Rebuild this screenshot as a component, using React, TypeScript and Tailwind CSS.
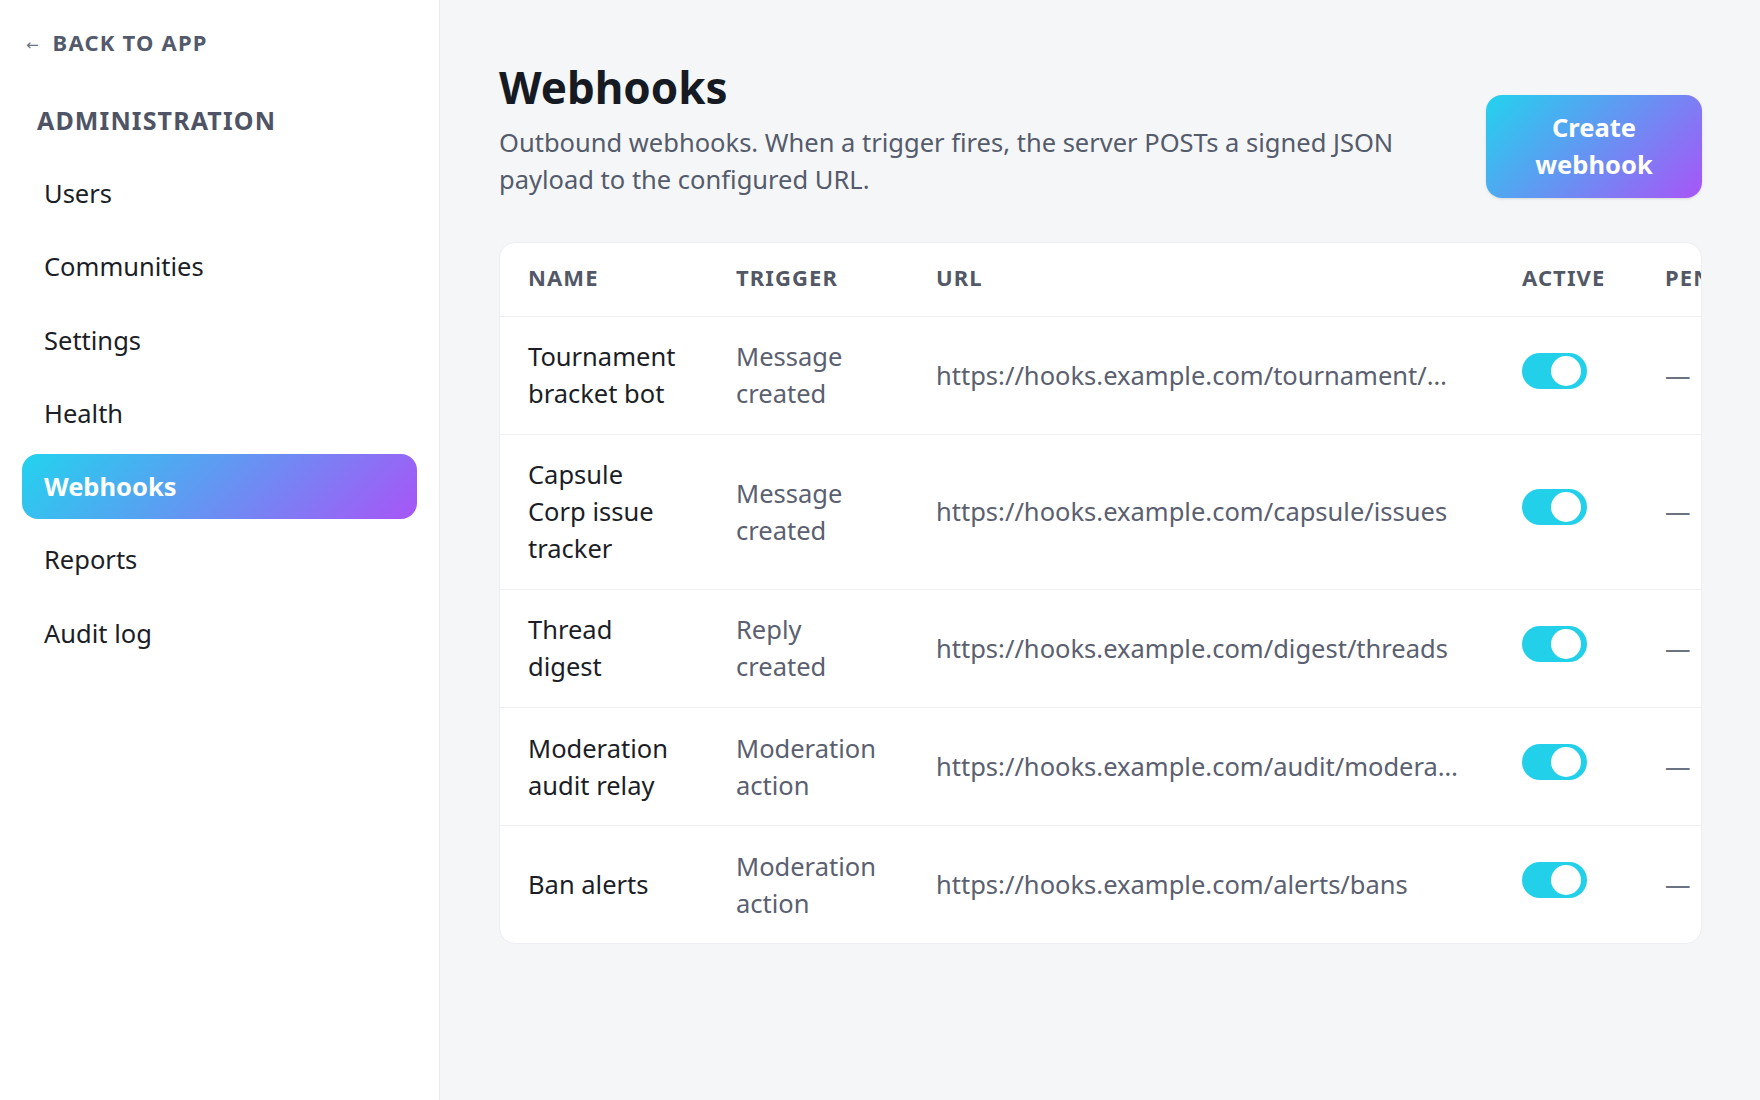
const navItems = ["Users", "Communities", "Settings", "Health", "Webhooks", "Reports", "Audit log"];

const hooks = [
  { name: "Tournament bracket bot", trigger: "Message created", url: "https://hooks.example.com/tournament/bracket-updates" },
  { name: "Capsule Corp issue tracker", trigger: "Message created", url: "https://hooks.example.com/capsule/issues" },
  { name: "Thread digest", trigger: "Reply created", url: "https://hooks.example.com/digest/threads" },
  { name: "Moderation audit relay", trigger: "Moderation action", url: "https://hooks.example.com/audit/moderation-events" },
  { name: "Ban alerts", trigger: "Moderation action", url: "https://hooks.example.com/alerts/bans" },
];

function Toggle() {
  // inline-block with no text: its baseline is the bottom edge, so it sits on the text baseline
  return (
    <span className="inline-block align-baseline w-[65px] h-[36px] rounded-full bg-[#22d0ea]">
      <span className="block w-[30px] h-[30px] mt-[3px] ml-[29px] rounded-full bg-white" />
    </span>
  );
}

function Sidebar() {
  return (
    <aside className="w-[440px] shrink-0 bg-white border-r border-[#e9ebef] px-[22px] pt-[27px]">
      <a className="flex items-center pl-[4px] h-[30px] text-[#525a6b]">
        <span className="text-[15px] leading-none mt-[6px] text-[#6b7280] font-['DejaVu_Sans',sans-serif]">←</span>
        <span className="ml-[14px] text-[22px] font-bold tracking-[0.055em] uppercase">Back to app</span>
      </a>
      <h2 className="mt-[45px] pl-[15px] h-[36px] leading-[36px] text-[25px] font-bold tracking-[0.045em] uppercase text-[#4e5465]">
        Administration
      </h2>
      <nav className="mt-[23px] flex flex-col gap-[8.3px]">
        {navItems.map((item) =>
          item === "Webhooks" ? (
            <a
              key={item}
              className="block rounded-[16px] px-[22px] py-[14px] leading-[37px] text-[25.5px] font-bold text-white bg-[linear-gradient(135deg,#22d3ee,#a855f7)]"
            >
              {item}
            </a>
          ) : (
            <a key={item} className="block rounded-[16px] px-[22px] py-[14px] leading-[37px] text-[25.5px] text-[#1b1e26]">
              {item}
            </a>
          )
        )}
      </nav>
    </aside>
  );
}

export default function App() {
  return (
    <div className="flex min-h-screen font-['Noto_Sans',sans-serif] bg-[#f5f6f8]">
      <Sidebar />
      <main className="flex-1 min-w-0 pl-[59px] pr-[58px] pt-[63px]">
        <div className="flex items-end justify-between gap-8">
          <div className="max-w-[950px]">
            <h1 className="text-[44px] leading-[48px] font-bold text-[#161a23]">Webhooks</h1>
            <p className="mt-[12.5px] text-[25.5px] leading-[37px] text-[#545b6b]">
              Outbound webhooks. When a trigger fires, the server POSTs a signed JSON payload to the configured URL.
            </p>
          </div>
          <button className="w-[216px] shrink-0 rounded-[16px] py-[14.5px] text-[25.5px] leading-[37px] font-bold text-white bg-[linear-gradient(135deg,#22d3ee,#a855f7)] shadow-sm">
            Create
            <br />
            webhook
          </button>
        </div>

        <div className="mt-[44px] bg-white rounded-[16px] border border-[#eceef2] overflow-hidden">
          <table className="table-fixed border-collapse w-[1336px] text-left">
            <colgroup>
              <col className="w-[208px]" />
              <col className="w-[200px]" />
              <col className="w-[586px]" />
              <col className="w-[143px]" />
              <col className="w-[199px]" />
            </colgroup>
            <thead>
              <tr className="border-b border-[#eef0f3]">
                {["Name", "Trigger", "URL", "Active", "Pending"].map((h) => (
                  <th
                    key={h}
                    className="px-[28px] pt-[19px] pb-[24px] leading-[30px] text-[22px] font-bold tracking-[0.05em] uppercase text-[#525866] whitespace-nowrap"
                  >
                    {h}
                  </th>
                ))}
              </tr>
            </thead>
            <tbody className="text-[25.5px] leading-[37px]">
              {hooks.map((h, i) => (
                <tr key={h.name} className={i < hooks.length - 1 ? "border-b border-[#eef0f3]" : ""}>
                  <td className="px-[28px] py-[21.6px] align-middle text-[#1b1e26]">{h.name}</td>
                  <td className="px-[28px] py-[21.6px] align-middle text-[#5a6070]">{h.trigger}</td>
                  <td className="pl-[28px] pr-[33px] py-[21.6px] align-middle text-[#5a6070] truncate">{h.url}</td>
                  <td className="px-[28px] py-[21.6px] align-middle">
                    <Toggle />
                  </td>
                  <td className="px-[28px] py-[21.6px] align-middle text-[#6b7280]">—</td>
                </tr>
              ))}
            </tbody>
          </table>
        </div>
      </main>
    </div>
  );
}
